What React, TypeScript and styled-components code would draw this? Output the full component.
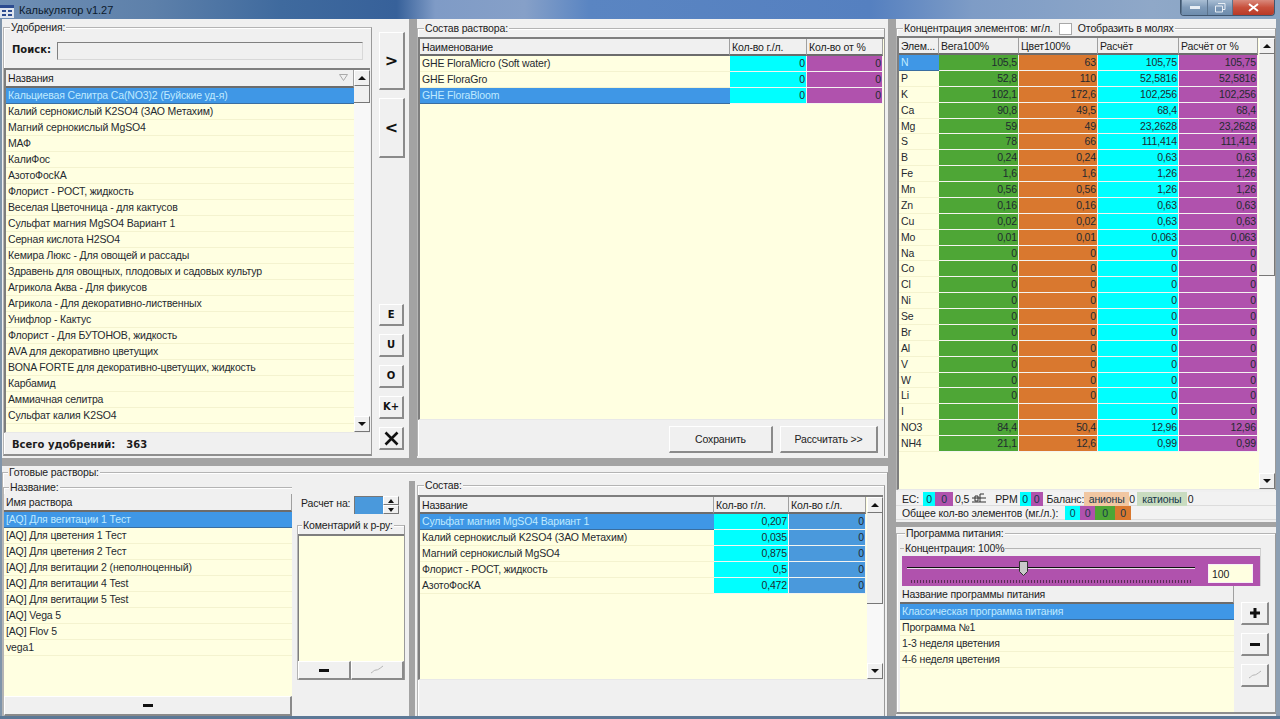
import React from 'react';
import styled, { createGlobalStyle } from 'styled-components';

const GlobalStyle = createGlobalStyle`
    html, body {
        margin: 0;
        padding: 0;
        background: #f0f0f0;
    }
    * {
        box-sizing: border-box;
    }
`;

const YELLOW = '#ffffe1';
const SELECT = '#3f97e6';
const CYAN = '#00ffff';
const PURPLE = '#b052ad';
const GREEN = '#4ea636';
const ORANGE = '#d9782f';
const BLUE = '#4a99dc';

const Window = styled.div`
    width: 1280px;
    height: 719px;
    display: flex;
    flex-direction: column;
    overflow: hidden;
    background: #f0f0f0;
    font-family: 'Liberation Sans', Arial, sans-serif;
    font-size: 10.5px;
    letter-spacing: -0.15px;
    color: #1c1c1c;
    border-bottom: 3px solid #5c7896;
`;

const TitleBar = styled.div`
    height: 19px;
    flex: none;
    display: flex;
    align-items: flex-start;
    background: linear-gradient(90deg, #6f8fb4 0%, #5d80aa 12%, #3f6a9e 22%, #37619a 31%, #7f9bc6 34%, #86a0c8 41%, #5a85c2 46%, #5580c0 68%, #7e9cc6 76%, #8fa8c8 90%, #86a3c2 100%);
`;

const TitleIcon = styled.svg`
    width: 15px;
    height: 15px;
    margin: 3px 4px 0 0;
    flex: none;
`;

const TitleText = styled.span`
    font-family: 'Liberation Sans', Arial, sans-serif;
    font-size: 11px;
    line-height: 20px;
    letter-spacing: 0;
    color: #0c1a2c;
`;

const CaptionButtons = styled.div`
    display: flex;
    margin-left: auto;
    margin-right: 5px;
    height: 16px;
    border: 1px solid #40566f;
    border-top: none;
    border-radius: 0 0 4px 4px;
    overflow: hidden;
`;

const CaptionButton = styled.div<{ $w: number; $close?: boolean }>`
    width: ${p => p.$w}px;
    display: flex;
    align-items: center;
    justify-content: center;
    color: #fff;
    background: ${p => p.$close
        ? 'linear-gradient(180deg, #d9897c 0%, #c8503c 50%, #b83a28 100%)'
        : 'linear-gradient(180deg, #a9bed4 0%, #7f9ab8 50%, #6d8cad 100%)'};
    border-left: 1px solid #5c748e;
`;

const Body = styled.div`
    flex: 1;
    display: flex;
    min-height: 0;
    border-left: 2px solid #7f94aa;
    border-right: 4px solid #8d9fb2;
`;

const LeftArea = styled.div`
    width: 886px;
    flex: none;
    display: flex;
    flex-direction: column;
`;

const TopRow = styled.div`
    height: 439px;
    flex: none;
    display: flex;
`;

const HSplit = styled.div<{ $h: number; $mt?: number }>`
    height: ${p => p.$h}px;
    flex: none;
    margin-top: ${p => p.$mt ?? 0}px;
    background: #a3a3a3;
`;

const VSplit = styled.div<{ $w: number; $mt?: number }>`
    width: ${p => p.$w}px;
    flex: none;
    margin-top: ${p => p.$mt ?? 0}px;
    background: #a3a3a3;
`;

const Group = styled.div<{ $w?: number; $h?: number; $bottom?: boolean }>`
    position: relative;
    display: flex;
    flex-direction: column;
    ${p => (p.$w ? `width: ${p.$w}px; flex: none;` : 'flex: 1; min-width: 0;')}
    ${p => (p.$h ? `height: ${p.$h}px;` : '')}
    border: 1px solid #b4b4b4;
    border-right-color: #9a9a9a;
    border-bottom: ${p => (p.$bottom ? '2px solid #8e8e8e' : 'none')};
    box-shadow: inset 1px 1px 0 #fff;
`;

const Legend = styled.div<{ $left?: number }>`
    position: absolute;
    top: -7px;
    left: ${p => p.$left ?? 6}px;
    display: flex;
    align-items: center;
    gap: 6px;
    height: 13px;
    padding: 0 1px;
    background: #f0f0f0;
    white-space: nowrap;
    line-height: 13px;
    color: #222;
`;

const LegendCheck = styled.span`
    width: 13px;
    height: 12px;
    background: #fff;
    border: 1px solid #a8a8a8;
`;

const FertGroup = styled(Group)`
    margin: 8px 0 2px 1px;
`;

const SearchRow = styled.div`
    height: 40px;
    flex: none;
    display: flex;
    align-items: flex-start;
    padding: 14px 0 0 8px;
    gap: 6px;
`;

const BoldLabel = styled.span`
    font-family: 'DejaVu Sans', sans-serif;
    font-weight: bold;
    font-size: 10px;
    letter-spacing: 0;
    line-height: 16px;
    color: #1a1a1a;
`;

const SearchInput = styled.div`
    width: 306px;
    height: 18px;
    background: #f0f0f0;
    border: 1px solid #d8d8d8;
    border-top: 1px solid #808080;
    border-left: 1px solid #808080;
`;

const TotalRow = styled.div`
    height: 21px;
    flex: none;
    display: flex;
    gap: 11px;
    padding: 1px 0 0 8px;
    align-items: center;
    font-family: 'DejaVu Sans', sans-serif;
    font-weight: bold;
    font-size: 10px;
    letter-spacing: 0;
`;

const TableFrame = styled.div<{ $mr?: number; $h?: number }>`
    display: flex;
    margin-right: ${p => p.$mr ?? 0}px;
    ${p => (p.$h ? `height: ${p.$h}px; flex: none;` : 'flex: 1; min-height: 0;')}
    border-top: 2px solid #7e7e7e;
    border-left: 2px solid #7e7e7e;
    border-bottom: 1px solid #e8e8e8;
    background: #f5f5f5;
`;

const TableBody = styled.div`
    display: flex;
    flex-direction: column;
    background: ${YELLOW};
    overflow: hidden;
    flex: 1;
    min-width: 0;
`;

const GridRow = styled.div<{ $cols: string; $h?: number }>`
    display: grid;
    grid-template-columns: ${p => p.$cols};
    height: ${p => p.$h ?? 16}px;
    flex: none;
`;

const HeaderCell = styled.div`
    position: relative;
    display: flex;
    align-items: center;
    padding-left: 2px;
    height: 100%;
    background: #f0f0f0;
    border-right: 1px solid #a0a0a0;
    border-bottom: 2px solid #6c6c6c;
    white-space: nowrap;
    overflow: hidden;
    line-height: 14px;
`;

const SortMark = styled.svg`
    position: absolute;
    right: 5px;
    top: 4px;
    width: 9px;
    height: 7px;
`;

const Cell = styled.div<{ $bg?: string; $right?: boolean; $sel?: boolean }>`
    height: 100%;
    line-height: 15px;
    padding: 0 ${p => (p.$right ? '1px' : '0')} 0 ${p => (p.$right ? '0' : '2px')};
    text-align: ${p => (p.$right ? 'right' : 'left')};
    white-space: nowrap;
    overflow: hidden;
    background: ${p => p.$bg ?? (p.$sel ? SELECT : YELLOW)};
    color: ${p => (p.$sel ? '#bfeaff' : '#1f2a30')};
    border-bottom: 1px solid ${p => (p.$bg ? '#f4f4f0' : p.$sel ? '#3a6ea0' : '#f4f3cf')};
    border-right: ${p => (p.$bg ? '1px solid #f4f4f0' : 'none')};
`;

const Scrollbar = styled.div`
    width: 16px;
    flex: none;
    display: flex;
    flex-direction: column;
    background: #f7f7f7;
`;

const ScrollArrow = styled.div<{ $down?: boolean }>`
    height: 16px;
    flex: none;
    display: flex;
    align-items: center;
    justify-content: center;
    background: #f0f0f0;
    border-right: 1px solid #777;
    border-bottom: 1px solid #777;
    border-left: 1px solid #fff;
    border-top: 1px solid #fff;
    &::after {
        content: '';
        border-left: 4px solid transparent;
        border-right: 4px solid transparent;
        ${p => (p.$down ? 'border-top: 4px solid #111;' : 'border-bottom: 4px solid #111;')}
    }
`;

const ScrollThumb = styled.div<{ $h: number }>`
    height: ${p => p.$h}px;
    flex: none;
    background: #f0f0f0;
    border-right: 1px solid #777;
    border-bottom: 1px solid #777;
`;

const ScrollTrack = styled.div`
    flex: 1;
    background: #f8f8f8;
`;

const ButtonCol = styled.div`
    width: 37px;
    flex: none;
    display: flex;
    flex-direction: column;
    padding: 13px 0 8px 7px;
    gap: 8px;
`;

const Spacer = styled.div`
    flex: 1;
`;

const Bevel = styled.div<{ $w?: number; $h: number }>`
    ${p => (p.$w ? `width: ${p.$w}px;` : 'flex: 1;')}
    height: ${p => p.$h}px;
    flex-shrink: 0;
    display: flex;
    align-items: center;
    justify-content: center;
    background: #f0f0f0;
    border-right: 2px solid #8a8a8a;
    border-bottom: 2px solid #8a8a8a;
    border-top: 1px solid #fff;
    border-left: 1px solid #fff;
    color: #111;
    line-height: 1;
`;

const ArrowGlyph = styled.span`
    font-family: 'DejaVu Sans', sans-serif;
    font-weight: bold;
    font-size: 16px;
`;

const LetterGlyph = styled.span`
    font-family: 'DejaVu Sans', sans-serif;
    font-weight: bold;
    font-size: 10px;
`;

const TextButton = styled(Bevel)`
    color: #222;
`;

const MinusBar = styled.span`
    width: 10px;
    height: 3px;
    background: #111;
`;

const CenterGroup = styled(Group)`
    margin: 9px 3px 2px 0;
    padding-top: 8px;
`;

const CenterFooter = styled.div`
    height: 36px;
    flex: none;
    display: flex;
    justify-content: flex-end;
    gap: 7px;
    padding: 6px 6px 0 0;
`;

const BottomRow = styled.div`
    flex: 1;
    min-height: 0;
    display: flex;
    padding: 6px 0 0 0;
`;

const ReadyGroup = styled(Group)`
    padding-top: 14px;
    flex-direction: row;
`;

const NameGroup = styled(Group)`
    height: 100%;
    border-right: none;
`;

const NameFooter = styled(Bevel)`
    width: auto;
    flex: none;
`;

const NameTableTop = styled.div`
    margin-top: 6px;
    flex: 1;
    min-height: 0;
    display: flex;
    flex-direction: column;
    background: ${YELLOW};
`;

const SideCol = styled.div`
    width: 117px;
    flex: none;
    display: flex;
    flex-direction: column;
    padding: 0 4px 0 5px;
`;

const CalcRow = styled.div`
    height: 38px;
    flex: none;
    display: flex;
    align-items: flex-start;
    padding: 9px 0 0 4px;
    gap: 4px;
    line-height: 14px;
`;

const CalcInput = styled.div`
    width: 29px;
    height: 18px;
    background: ${BLUE};
    border-top: 1px solid #777;
    border-left: 1px solid #777;
`;

const Spin = styled.div`
    width: 16px;
    height: 18px;
    display: flex;
    flex-direction: column;
    margin-left: -4px;
`;

const SpinPart = styled(ScrollArrow)`
    height: 9px;
    &::after {
        border-left-width: 3px;
        border-right-width: 3px;
    }
`;

const CommentGroup = styled(Group)`
    flex: none;
    height: 155px;
    padding-top: 8px;
    border-bottom: none;
`;

const CommentArea = styled.div`
    flex: 1;
    background: ${YELLOW};
    border-top: 2px solid #7e7e7e;
    border-left: 1px solid #7e7e7e;
`;

const CommentButtons = styled.div`
    display: flex;
    height: 19px;
    flex: none;
`;

const CompositionGroup = styled(Group)`
    margin: -2px 2px 0 2px;
    padding-top: 9px;
`;

const RightArea = styled.div`
    flex: 1;
    min-width: 0;
    display: flex;
    flex-direction: column;
`;

const ConcGroup = styled(Group)`
    flex: none;
    height: 462px;
    margin: 9px 0 2px 0;
    padding-top: 7px;
`;

const StatusRow = styled.div`
    height: 14px;
    flex: none;
    display: flex;
    align-items: center;
    padding-left: 6px;
    white-space: nowrap;
    line-height: 14px;
    background: #f2f2f2;
    border-bottom: 1px solid #dcdcdc;
`;

const Chip = styled.span<{ $bg: string; $w: number; $ml?: number }>`
    display: inline-block;
    flex: none;
    width: ${p => p.$w}px;
    margin-left: ${p => p.$ml ?? 0}px;
    height: 14px;
    line-height: 14px;
    background: ${p => p.$bg};
    text-align: center;
    color: #14364a;
`;

const StatusText = styled.span<{ $ml?: number }>`
    margin-left: ${p => p.$ml ?? 0}px;
`;

const MiniSpin = styled.svg`
    width: 16px;
    height: 11px;
    margin-left: 2px;
`;

const ProgramGroup = styled(Group)`
    margin: 6px 0 2px 0;
    flex: 1;
    padding: 14px 3px 0 3px;
`;

const SliderGroup = styled.div`
    position: relative;
    flex: none;
    height: 38px;
    border-top: 1px solid #b4b4b4;
    border-right: 1px solid #d0d0d0;
    margin-right: 11px;
    padding-top: 7px;
`;

const SliderPanel = styled.div`
    height: 30px;
    margin-left: 2px;
    display: flex;
    align-items: flex-start;
    padding: 8px 0 0 5px;
    background: ${PURPLE};
`;

const SliderTrackBox = styled.div`
    position: relative;
    width: 288px;
    height: 22px;
    flex: none;
`;

const SliderLine = styled.div`
    position: absolute;
    left: 0;
    right: 0;
    top: 3px;
    height: 2px;
    background: #111;
    border-bottom: 1px solid #e9dbe9;
`;

const SliderTicks = styled.div`
    position: absolute;
    left: 4px;
    right: 3px;
    top: 16px;
    height: 3px;
    background: repeating-linear-gradient(90deg, #5a2a56 0 1px, transparent 1px 3px);
`;

const SliderThumb = styled.svg`
    position: absolute;
    left: 112px;
    top: -3px;
    width: 9px;
    height: 15px;
`;

const SliderInput = styled.div`
    width: 45px;
    height: 19px;
    margin: 0 0 0 13px;
    padding-left: 3px;
    line-height: 18px;
    background: ${YELLOW};
    border: 1px solid #f7eef7;
    flex: none;
`;

const ProgramRow = styled.div`
    flex: 1;
    min-height: 0;
    display: flex;
`;

const ProgramList = styled.div`
    width: 334px;
    flex: none;
    display: flex;
    flex-direction: column;
    background: ${YELLOW};
`;

const ProgramButtons = styled.div`
    flex: 1;
    display: flex;
    flex-direction: column;
    align-items: flex-end;
    gap: 8px;
    padding: 16px 3px 0 0;
`;

const CurveIcon = () => (
    <svg width="14" height="10" viewBox="0 0 14 10">
        <path d="M1 8 C3 7 4 5 6 5 S9 4 13 1" fill="none" stroke="#b5b5b5" strokeWidth="1" />
    </svg>
);

const fertilizers = [
    'Кальциевая Селитра Ca(NO3)2 (Буйские уд-я)',
    'Калий  сернокислый  K2SO4 (ЗАО Метахим)',
    'Магний сернокислый MgSO4',
    'МАФ',
    'КалиФос',
    'АзотоФосКА',
    'Флорист - РОСТ, жидкость',
    'Веселая Цветочница - для кактусов',
    'Сульфат магния MgSO4 Вариант 1',
    'Серная кислота H2SO4',
    'Кемира Люкс - Для овощей и рассады',
    'Здравень для овощных, плодовых и садовых культур',
    'Агрикола Аква - Для фикусов',
    'Агрикола - Для декоративно-лиственных',
    'Унифлор - Кактус',
    'Флорист - Для БУТОНОВ, жидкость',
    'AVA для декоративно цветущих',
    'BONA FORTE для декоративно-цветущих, жидкость',
    'Карбамид',
    'Аммиачная селитра',
    'Сульфат калия K2SO4',
    ' ',
];

const solutionNames = [
    '[AQ] Для вегитации 1 Тест',
    '[AQ] Для цветения 1 Тест',
    '[AQ] Для цветения 2 Тест',
    '[AQ] Для вегитации 2 (неполноценный)',
    '[AQ] Для вегитации 4 Test',
    '[AQ] Для вегитации 5 Test',
    '[AQ] Vega 5',
    '[AQ] Flov 5',
    'vega1',
];

const composition = [
    ['Сульфат магния MgSO4 Вариант 1', '0,207'],
    ['Калий  сернокислый  K2SO4 (ЗАО Метахим)', '0,035'],
    ['Магний сернокислый MgSO4', '0,875'],
    ['Флорист - РОСТ, жидкость', '0,5'],
    ['АзотоФосКА', '0,472'],
];

const elements = [
    ['N', '105,5', '63', '105,75', '105,75'],
    ['P', '52,8', '110', '52,5816', '52,5816'],
    ['K', '102,1', '172,6', '102,256', '102,256'],
    ['Ca', '90,8', '49,5', '68,4', '68,4'],
    ['Mg', '59', '49', '23,2628', '23,2628'],
    ['S', '78', '66', '111,414', '111,414'],
    ['B', '0,24', '0,24', '0,63', '0,63'],
    ['Fe', '1,6', '1,6', '1,26', '1,26'],
    ['Mn', '0,56', '0,56', '1,26', '1,26'],
    ['Zn', '0,16', '0,16', '0,63', '0,63'],
    ['Cu', '0,02', '0,02', '0,63', '0,63'],
    ['Mo', '0,01', '0,01', '0,063', '0,063'],
    ['Na', '0', '0', '0', '0'],
    ['Co', '0', '0', '0', '0'],
    ['Cl', '0', '0', '0', '0'],
    ['Ni', '0', '0', '0', '0'],
    ['Se', '0', '0', '0', '0'],
    ['Br', '0', '0', '0', '0'],
    ['Al', '0', '0', '0', '0'],
    ['V', '0', '0', '0', '0'],
    ['W', '0', '0', '0', '0'],
    ['Li', '0', '0', '0', '0'],
    ['I', '', '', '0', '0'],
    ['NO3', '84,4', '50,4', '12,96', '12,96'],
    ['NH4', '21,1', '12,6', '0,99', '0,99'],
];

const programs = [
    'Классическая программа питания',
    'Программа №1',
    '1-3 неделя цветения',
    '4-6 неделя цветения',
];

const mixCols = '310px 77px 76px';
const compCols = '294px 75px 77px';
const elemCols = '40px 80px 79px 81px 79px';

const App: React.FC = () => (
    <Window>
        <GlobalStyle />
        <TitleBar>
            <TitleIcon viewBox="0 0 15 15">
                <rect x="0" y="2" width="14" height="13" fill="#dfe6ee" />
                <rect x="0" y="2" width="14" height="3" fill="#2c4c90" />
                <path d="M2 7h4v2H2zM8 7h4v2H8zM2 11h4v2H2zM8 11h4v2H8z" fill="#2c4c90" />
            </TitleIcon>
            <TitleText>Калькулятор v1.27</TitleText>
            <CaptionButtons>
                <CaptionButton $w={26}>
                    <svg width="10" height="4" viewBox="0 0 10 4"><rect width="10" height="3" fill="#e8eef5" /></svg>
                </CaptionButton>
                <CaptionButton $w={25}>
                    <svg width="11" height="10" viewBox="0 0 11 10">
                        <path d="M3 .5h7v6H8M.5 3h7v6h-7z" fill="none" stroke="#e8eef5" />
                    </svg>
                </CaptionButton>
                <CaptionButton $w={42} $close>
                    <svg width="11" height="9" viewBox="0 0 11 9">
                        <path d="M1 1l9 7M10 1L1 8" stroke="#fff" strokeWidth="2" />
                    </svg>
                </CaptionButton>
            </CaptionButtons>
        </TitleBar>
        <Body>
            <LeftArea>
                <TopRow>
                    <FertGroup $w={369} $bottom>
                        <Legend>Удобрения:</Legend>
                        <SearchRow>
                            <BoldLabel>Поиск:</BoldLabel>
                            <SearchInput />
                        </SearchRow>
                        <TableFrame $mr={1}>
                            <TableBody>
                                <GridRow $cols="1fr" $h={18}>
                                    <HeaderCell>
                                        Названия
                                        <SortMark viewBox="0 0 9 7">
                                            <path d="M.5.5h8L4.5 6.5z" fill="none" stroke="#aaa" />
                                        </SortMark>
                                    </HeaderCell>
                                </GridRow>
                                {fertilizers.map((name, i) => (
                                    <GridRow key={i} $cols="1fr">
                                        <Cell $sel={i === 0}>{name}</Cell>
                                    </GridRow>
                                ))}
                            </TableBody>
                            <Scrollbar>
                                <ScrollArrow />
                                <ScrollThumb $h={17} />
                                <ScrollTrack />
                                <ScrollArrow $down />
                            </Scrollbar>
                        </TableFrame>
                        <TotalRow>
                            <span>Всего удобрений:</span>
                            <span>363</span>
                        </TotalRow>
                    </FertGroup>
                    <ButtonCol>
                        <Bevel $w={26} $h={58}><ArrowGlyph>&gt;</ArrowGlyph></Bevel>
                        <Bevel $w={26} $h={60}><ArrowGlyph>&lt;</ArrowGlyph></Bevel>
                        <Spacer />
                        <Bevel $w={25} $h={22}><LetterGlyph>E</LetterGlyph></Bevel>
                        <Bevel $w={25} $h={23}><LetterGlyph>U</LetterGlyph></Bevel>
                        <Bevel $w={25} $h={23}><LetterGlyph>O</LetterGlyph></Bevel>
                        <Bevel $w={25} $h={23}><LetterGlyph>K+</LetterGlyph></Bevel>
                        <Bevel $w={25} $h={23}>
                            <svg width="15" height="15" viewBox="0 0 15 15">
                                <path d="M1.5 1.5l12 12M13.5 1.5l-12 12" stroke="#111" strokeWidth="2.6" />
                            </svg>
                        </Bevel>
                    </ButtonCol>
                    <VSplit $w={8} />
                    <CenterGroup>
                        <Legend>Состав раствора:</Legend>
                        <TableFrame>
                            <TableBody>
                                <GridRow $cols={mixCols} $h={17}>
                                    <HeaderCell>Наименование</HeaderCell>
                                    <HeaderCell>Кол-во г./л.</HeaderCell>
                                    <HeaderCell>Кол-во от %</HeaderCell>
                                </GridRow>
                                {['GHE FloraMicro (Soft water)', 'GHE FloraGro', 'GHE FloraBloom'].map((name, i) => (
                                    <GridRow key={name} $cols={mixCols}>
                                        <Cell $sel={i === 2}>{name}</Cell>
                                        <Cell $bg={CYAN} $right>0</Cell>
                                        <Cell $bg={PURPLE} $right>0</Cell>
                                    </GridRow>
                                ))}
                            </TableBody>
                        </TableFrame>
                        <CenterFooter>
                            <TextButton $w={104} $h={27}>Сохранить</TextButton>
                            <TextButton $w={98} $h={27}>Рассчитать &gt;&gt;</TextButton>
                        </CenterFooter>
                    </CenterGroup>
                </TopRow>
                <HSplit $h={8} />
                <BottomRow>
                    <ReadyGroup>
                        <Legend $left={5}>Готовые растворы:</Legend>
                        <NameGroup $w={289}>
                            <Legend $left={5}>Название:</Legend>
                            <NameTableTop>
                                <GridRow $cols="1fr" $h={18}>
                                    <HeaderCell>Имя раствора</HeaderCell>
                                </GridRow>
                                {solutionNames.map((name, i) => (
                                    <GridRow key={name} $cols="1fr">
                                        <Cell $sel={i === 0}>{name}</Cell>
                                    </GridRow>
                                ))}
                            </NameTableTop>
                            <NameFooter $h={20}><MinusBar /></NameFooter>
                        </NameGroup>
                        <SideCol>
                            <CalcRow>
                                <span>Расчет на:</span>
                                <CalcInput />
                                <Spin>
                                    <SpinPart />
                                    <SpinPart $down />
                                </Spin>
                            </CalcRow>
                            <CommentGroup>
                                <Legend $left={4}>Коментарий к р-ру:</Legend>
                                <CommentArea />
                                <CommentButtons>
                                    <Bevel $h={19}><MinusBar /></Bevel>
                                    <Bevel $h={19}><CurveIcon /></Bevel>
                                </CommentButtons>
                            </CommentGroup>
                        </SideCol>
                        <VSplit $w={6} $mt={-6} />
                        <CompositionGroup>
                            <Legend>Состав:</Legend>
                            <TableFrame $mr={1} $h={185}>
                                <TableBody>
                                    <GridRow $cols={compCols} $h={17}>
                                        <HeaderCell>Название</HeaderCell>
                                        <HeaderCell>Кол-во г/л.</HeaderCell>
                                        <HeaderCell>Кол-во г./л.</HeaderCell>
                                    </GridRow>
                                    {composition.map(([name, amount], i) => (
                                        <GridRow key={name} $cols={compCols}>
                                            <Cell $sel={i === 0}>{name}</Cell>
                                            <Cell $bg={CYAN} $right>{amount}</Cell>
                                            <Cell $bg={BLUE} $right>0</Cell>
                                        </GridRow>
                                    ))}
                                </TableBody>
                                <Scrollbar>
                                    <ScrollArrow />
                                    <ScrollThumb $h={91} />
                                    <ScrollTrack />
                                    <ScrollArrow $down />
                                </Scrollbar>
                            </TableFrame>
                        </CompositionGroup>
                    </ReadyGroup>
                </BottomRow>
            </LeftArea>
            <VSplit $w={8} />
            <RightArea>
                <ConcGroup>
                    <Legend>
                        Концентрация элементов: мг/л.
                        <LegendCheck />
                        Отобразить в молях
                    </Legend>
                    <TableFrame>
                        <TableBody>
                            <GridRow $cols={elemCols} $h={17}>
                                <HeaderCell>Элем...</HeaderCell>
                                <HeaderCell>Вега100%</HeaderCell>
                                <HeaderCell>Цвет100%</HeaderCell>
                                <HeaderCell>Расчёт</HeaderCell>
                                <HeaderCell>Расчёт от %</HeaderCell>
                            </GridRow>
                            {elements.map(([el, a, b, c, d], i) => (
                                <GridRow key={el} $cols={elemCols} $h={15.875}>
                                    <Cell $sel={i === 0}>{el}</Cell>
                                    <Cell $bg={GREEN} $right>{a}</Cell>
                                    <Cell $bg={ORANGE} $right>{b}</Cell>
                                    <Cell $bg={CYAN} $right>{c}</Cell>
                                    <Cell $bg={PURPLE} $right>{d}</Cell>
                                </GridRow>
                            ))}
                        </TableBody>
                        <Scrollbar>
                            <ScrollArrow />
                            <ScrollThumb $h={222} />
                            <ScrollTrack />
                            <ScrollArrow $down />
                        </Scrollbar>
                    </TableFrame>
                </ConcGroup>
                <StatusRow>
                    EC:
                    <Chip $bg={CYAN} $w={12} $ml={4}>0</Chip>
                    <Chip $bg={PURPLE} $w={18}>0</Chip>
                    <StatusText $ml={2}>0,5</StatusText>
                    <MiniSpin viewBox="0 0 16 11">
                        <path d="M1 5h14M1 9h14M9 1h4M9 1v8M4 3h3v5H4z" fill="none" stroke="#333" />
                    </MiniSpin>
                    <StatusText $ml={8}>PPM</StatusText>
                    <Chip $bg={CYAN} $w={11} $ml={2}>0</Chip>
                    <Chip $bg={PURPLE} $w={12}>0</Chip>
                    <StatusText $ml={4}>Баланс:</StatusText>
                    <Chip $bg="#f1c7a2" $w={45}>анионы</Chip>
                    <span>0</span>
                    <Chip $bg="#c9dcc0" $w={50} $ml={2}>катионы</Chip>
                    <StatusText $ml={1}>0</StatusText>
                </StatusRow>
                <StatusRow>
                    Общее кол-во элементов (мг./л.):
                    <Chip $bg={CYAN} $w={15} $ml={7}>0</Chip>
                    <Chip $bg={PURPLE} $w={15}>0</Chip>
                    <Chip $bg={GREEN} $w={20}>0</Chip>
                    <Chip $bg={ORANGE} $w={16}>0</Chip>
                </StatusRow>
                <HSplit $h={5} $mt={2} />
                <ProgramGroup $bottom>
                    <Legend $left={8}>Программа питания:</Legend>
                    <SliderGroup>
                        <Legend $left={4}>Концентрация: 100%</Legend>
                        <SliderPanel>
                            <SliderTrackBox>
                                <SliderLine />
                                <SliderTicks />
                                <SliderThumb viewBox="0 0 9 15">
                                    <path d="M.5.5h8v10l-4 4-4-4z" fill="#c9c9c9" stroke="#333" />
                                </SliderThumb>
                            </SliderTrackBox>
                            <SliderInput>100</SliderInput>
                        </SliderPanel>
                    </SliderGroup>
                    <ProgramRow>
                        <ProgramList>
                            <GridRow $cols="1fr" $h={18}>
                                <HeaderCell>Название программы питания</HeaderCell>
                            </GridRow>
                            {programs.map((name, i) => (
                                <GridRow key={name} $cols="1fr">
                                    <Cell $sel={i === 0}>{name}</Cell>
                                </GridRow>
                            ))}
                        </ProgramList>
                        <ProgramButtons>
                            <Bevel $w={28} $h={23}>
                                <svg width="10" height="10" viewBox="0 0 10 10">
                                    <path d="M5 0v10M0 5h10" stroke="#111" strokeWidth="3" />
                                </svg>
                            </Bevel>
                            <Bevel $w={28} $h={23}><MinusBar /></Bevel>
                            <Bevel $w={28} $h={23}><CurveIcon /></Bevel>
                        </ProgramButtons>
                    </ProgramRow>
                </ProgramGroup>
            </RightArea>
        </Body>
    </Window>
);

export default App;
